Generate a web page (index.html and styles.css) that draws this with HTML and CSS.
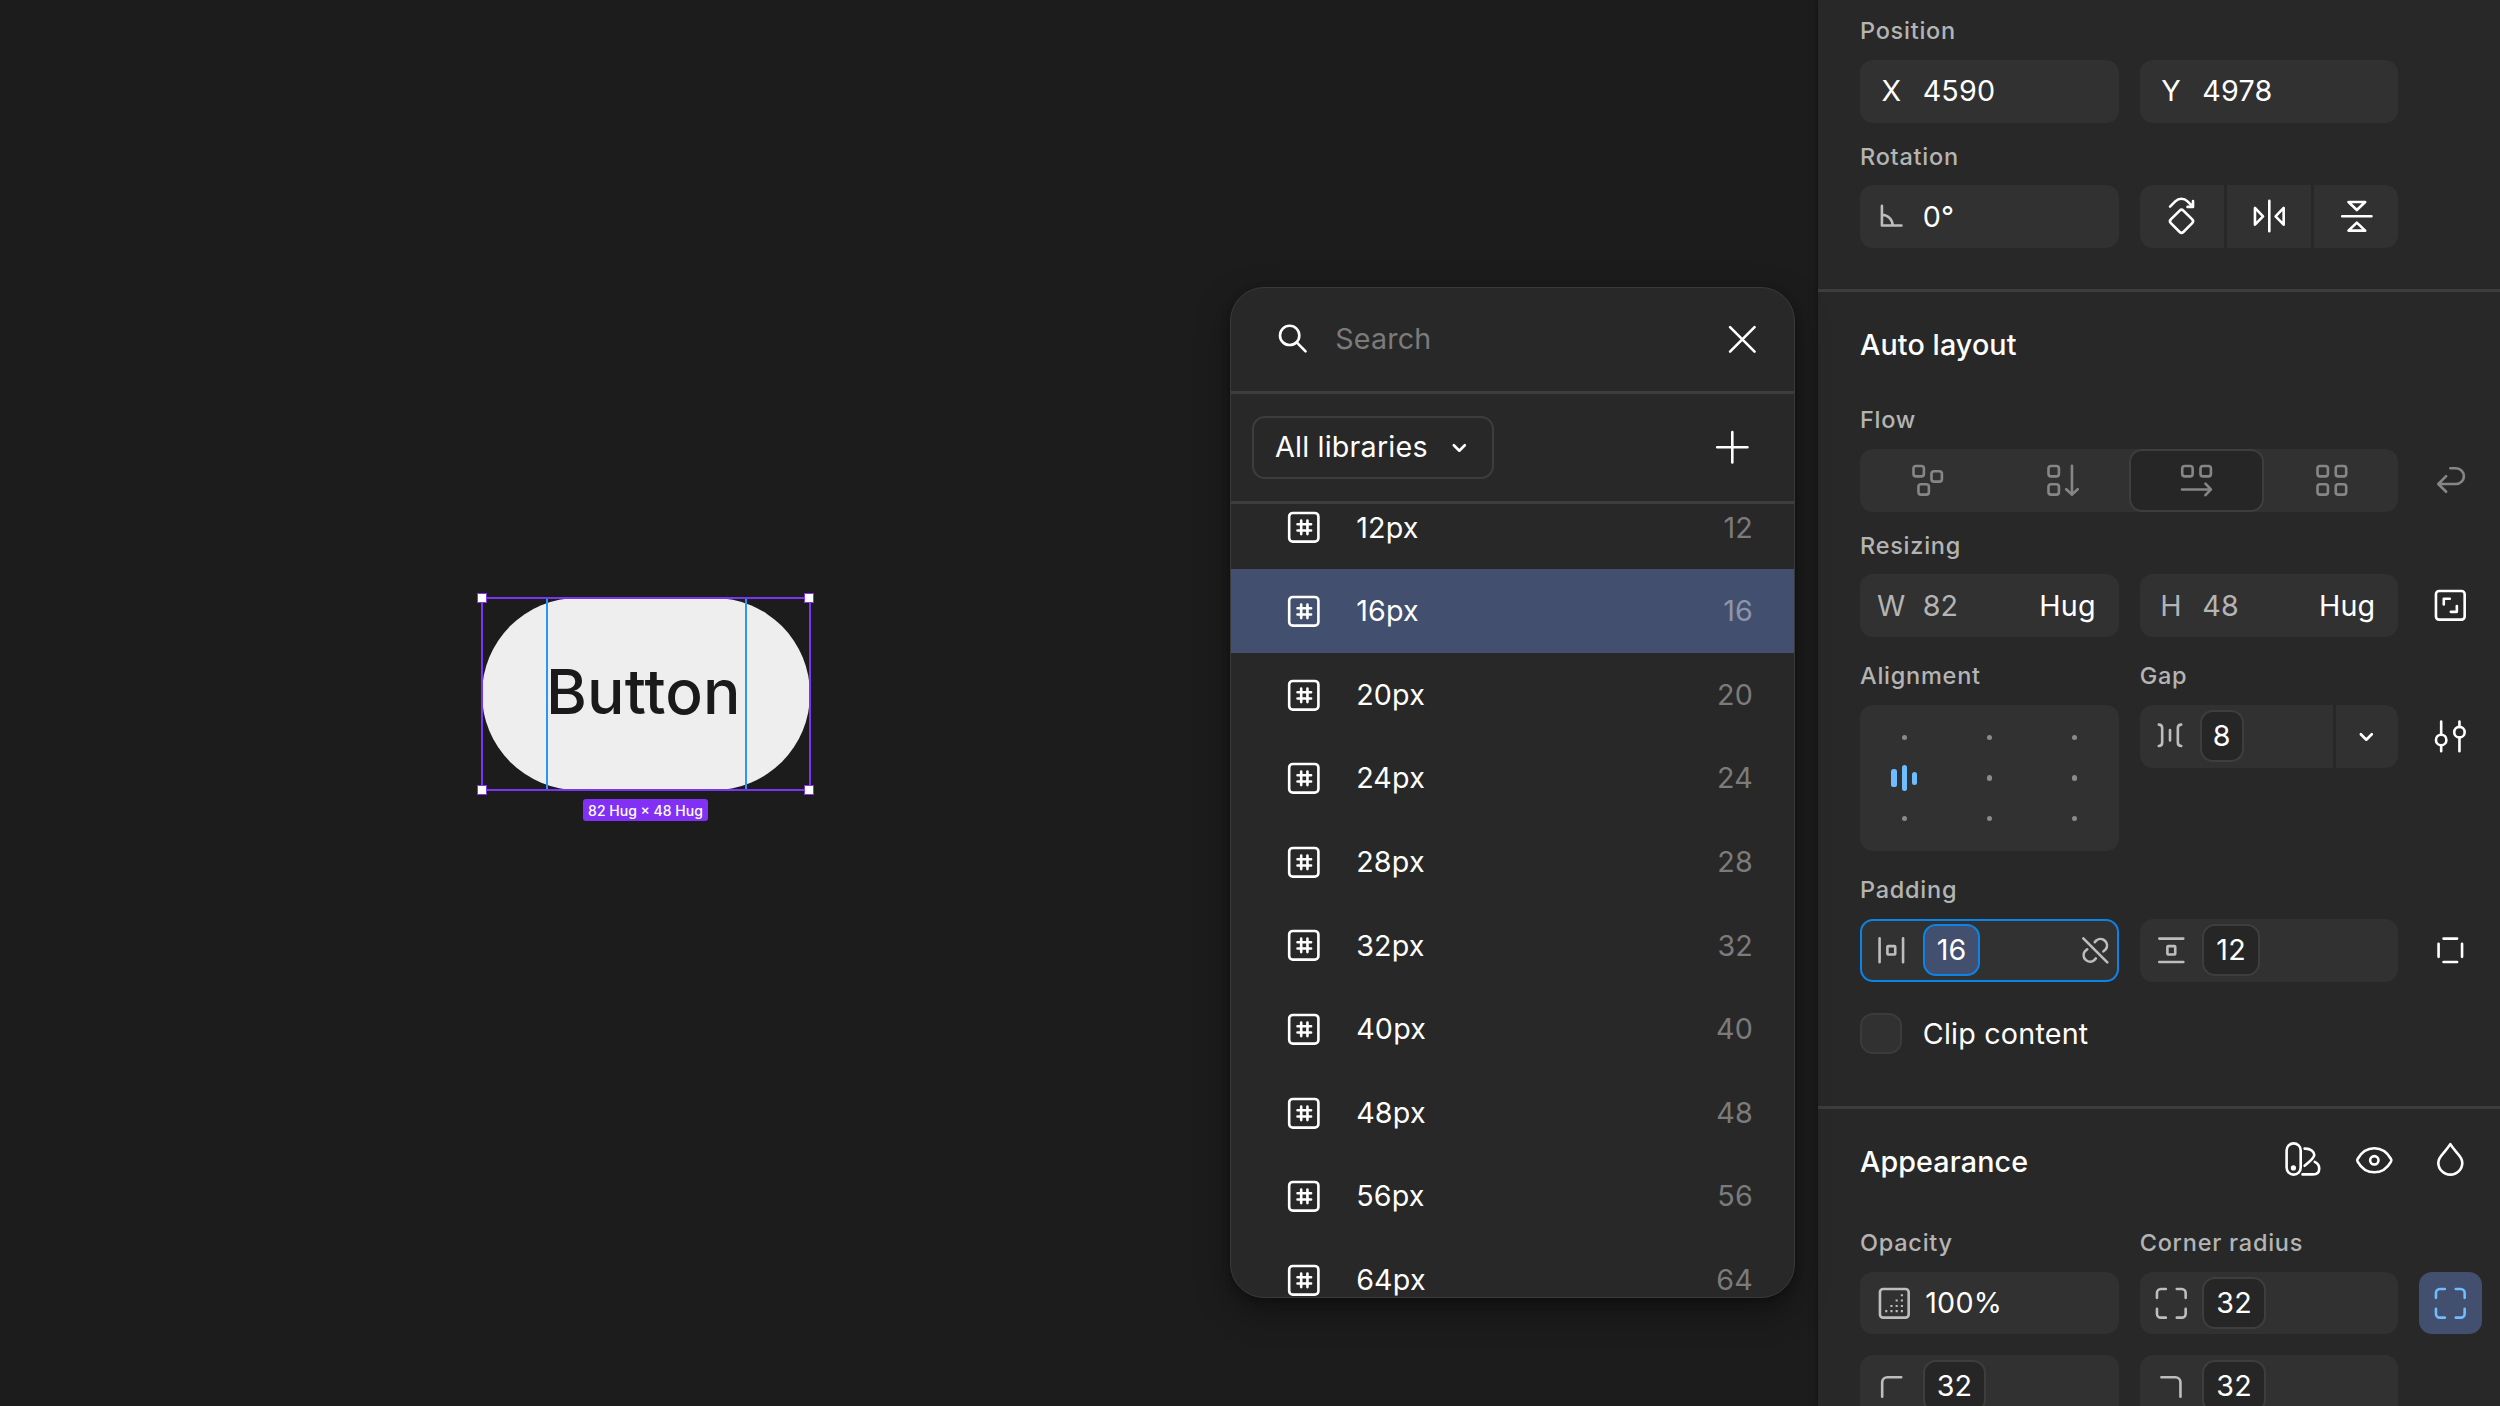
FILE: index.html
```
<!DOCTYPE html>
<html lang="en">
<head>
<meta charset="utf-8">
<title>Design editor</title>
<link rel="stylesheet" href="styles.css">
</head>
<body>
<svg class="defs" aria-hidden="true">
  <symbol id="i-number" viewBox="0 0 24 24"><rect x="6.2" y="6.5" width="11.2" height="11" rx="1.4"/><path d="M10.8 9.4v5.2M13.2 9.4v5.2M9.4 10.8h5.2M9.4 13.2h5.2"/></symbol>
  <symbol id="i-chevron" viewBox="0 0 24 24"><path d="M9.9 11.2L12 13.3l2.1-2.1"/></symbol>
  <symbol id="i-corners" viewBox="0 0 24 24"><path d="M6.5 9.9V8A1.5 1.5 0 0 1 8 6.5h1.9M14.1 6.5H16A1.5 1.5 0 0 1 17.5 8v1.9M17.5 14.1V16a1.5 1.5 0 0 1-1.5 1.5h-1.9M9.9 17.5H8A1.5 1.5 0 0 1 6.5 16v-1.9"/></symbol>
</svg>

<main class="canvas">
  <div class="node">
    <span class="node-text">Button</span>
    <div class="pad-guides"></div>
    <div class="selection"><i></i><i></i><i></i><i></i></div>
    <span class="size-tag">82 Hug × 48 Hug</span>
  </div>

  <section class="picker">
    <header class="picker-search">
      <svg class="icon" viewBox="0 0 24 24"><circle cx="10.6" cy="10.5" r="3.7"/><path d="M13.3 13.2l3.4 3.4"/></svg>
      <span class="placeholder">Search</span>
      <svg class="icon" viewBox="0 0 24 24"><path d="M7.3 7.3l9.4 9.4M16.7 7.3l-9.4 9.4"/></svg>
    </header>
    <div class="picker-filter">
      <button class="select">All libraries<svg class="icon" viewBox="0 0 24 24"><use href="#i-chevron"/></svg></button>
      <svg class="icon" viewBox="0 0 24 24"><path d="M12 6.2v11.6M6.2 12h11.6"/></svg>
    </div>
    <ul class="options">
      <li><svg class="icon"><use href="#i-number"/></svg><span>12px</span><em>12</em></li>
      <li class="active"><svg class="icon"><use href="#i-number"/></svg><span>16px</span><em>16</em></li>
      <li><svg class="icon"><use href="#i-number"/></svg><span>20px</span><em>20</em></li>
      <li><svg class="icon"><use href="#i-number"/></svg><span>24px</span><em>24</em></li>
      <li><svg class="icon"><use href="#i-number"/></svg><span>28px</span><em>28</em></li>
      <li><svg class="icon"><use href="#i-number"/></svg><span>32px</span><em>32</em></li>
      <li><svg class="icon"><use href="#i-number"/></svg><span>40px</span><em>40</em></li>
      <li><svg class="icon"><use href="#i-number"/></svg><span>48px</span><em>48</em></li>
      <li><svg class="icon"><use href="#i-number"/></svg><span>56px</span><em>56</em></li>
      <li><svg class="icon"><use href="#i-number"/></svg><span>64px</span><em>64</em></li>
    </ul>
  </section>
</main>

<aside class="sidebar">
  <section class="section section--position">
    <div class="row">
      <div class="group">
        <label>Position</label>
        <div class="field"><span class="prefix">X</span><span>4590</span></div>
      </div>
      <div class="group">
        <label></label>
        <div class="field"><span class="prefix">Y</span><span>4978</span></div>
      </div>
    </div>
    <div class="row">
      <div class="group">
        <label>Rotation</label>
        <div class="field"><svg class="icon dim" viewBox="0 0 24 24"><path d="M8.4 8v7.5h7.5M8.4 11.4a4.1 4.1 0 0 1 4.1 4.1"/></svg><span>0°</span></div>
      </div>
      <div class="group">
        <label></label>
        <div class="buttons">
          <span><svg class="icon" viewBox="0 0 24 24"><path d="M11 9.8a1 1 0 0 1 1.4 0l3.4 3.4a1 1 0 0 1 0 1.4L12.4 18a1 1 0 0 1-1.4 0l-3.4-3.4a1 1 0 0 1 0-1.4zM7.3 8.3l2-2c1.4-1.4 3.3-1.4 4.7 0l2 2M16.1 6.2v2.2H14"/></svg></span>
          <span><svg class="icon" viewBox="0 0 24 24"><path d="M12 6.1v11.6M6.5 8.8v6.4L9.6 12zM17.5 8.8v6.4L14.4 12z"/></svg></span>
          <span><svg class="icon" viewBox="0 0 24 24"><path d="M6.6 12h11.2M9 6.5h6.4l-3.2 3.1zM9 17.5h6.4l-3.2-3.1z"/></svg></span>
        </div>
      </div>
    </div>
  </section>

  <section class="section section--layout">
    <header><h2>Auto layout</h2></header>
    <div class="row">
      <div class="group group--wide">
        <label>Flow</label>
        <div class="segments">
          <span><svg class="icon" viewBox="0 0 24 24"><rect x="6.7" y="6.5" width="4" height="4" rx="1"/><rect x="13.6" y="8.5" width="4" height="4" rx="1"/><rect x="8.6" y="13.5" width="4" height="4" rx="1"/></svg></span>
          <span><svg class="icon" viewBox="0 0 24 24"><rect x="6.7" y="6.5" width="4" height="4" rx="1"/><rect x="6.7" y="13.5" width="4" height="4" rx="1"/><path d="M15.7 6.4v11.1M13.5 15.4l2.2 2.1 2.2-2.1"/></svg></span>
          <span class="on"><svg class="icon" viewBox="0 0 24 24"><rect x="6.6" y="6.5" width="4" height="4" rx="1"/><rect x="13.6" y="6.5" width="4" height="4" rx="1"/><path d="M6.5 15.5h11.1M15.5 13.3l2.1 2.2-2.1 2.2"/></svg></span>
          <span><svg class="icon" viewBox="0 0 24 24"><rect x="6.7" y="6.5" width="4" height="4" rx="1"/><rect x="13.7" y="6.5" width="4" height="4" rx="1"/><rect x="6.7" y="13.5" width="4" height="4" rx="1"/><rect x="13.7" y="13.5" width="4" height="4" rx="1"/></svg></span>
        </div>
      </div>
      <div class="action muted"><svg class="icon" viewBox="0 0 24 24"><path d="M12 7.4h2.2a3 3 0 0 1 0 6H7.5M10.4 10.4l-3 3 3 3"/></svg></div>
    </div>
    <div class="row">
      <div class="group">
        <label>Resizing</label>
        <div class="field"><span class="prefix soft">W</span><span class="soft">82</span><span class="mode">Hug</span></div>
      </div>
      <div class="group">
        <label></label>
        <div class="field"><span class="prefix soft">H</span><span class="soft">48</span><span class="mode">Hug</span></div>
      </div>
      <div class="action"><svg class="icon" viewBox="0 0 24 24"><rect x="6.5" y="6.5" width="11" height="11" rx="1.2"/><path d="M9.5 11.7V9.5h2.3M14.5 12.3v2.2h-2.3"/></svg></div>
    </div>
    <div class="row row--paired">
      <div class="group">
        <label>Alignment</label>
        <div class="align">
          <i></i><i></i><i></i>
          <b><u></u><u></u><u></u></b><i></i><i></i>
          <i></i><i></i><i></i>
        </div>
      </div>
      <div class="group">
        <label>Gap</label>
        <div class="combo">
          <div class="field field--gap"><svg class="icon dim" viewBox="0 0 24 24"><path d="M7.2 7.5q1.3 0 1.3 1.3v5.6q0 1.3-1.3 1.3M15.8 7.5q-1.3 0-1.3 1.3v5.6q0 1.3 1.3 1.3M11.5 9.6v4"/></svg><span class="chip">8</span></div>
          <div class="drop"><svg class="icon" viewBox="0 0 24 24"><use href="#i-chevron"/></svg></div>
        </div>
      </div>
      <div class="action"><svg class="icon" viewBox="0 0 24 24"><circle cx="8.5" cy="13.4" r="2"/><circle cx="15.5" cy="10.4" r="2"/><path d="M8.5 6.3v5.1M8.5 15.4v2.3M15.5 6.3v2.1M15.5 12.4v5.3"/></svg></div>
    </div>
    <div class="row row--paired">
      <div class="group">
        <label>Padding</label>
        <div class="field focus"><svg class="icon dim" viewBox="0 0 24 24"><path d="M7.5 7.4v9.2M16.5 7.4v9.2"/><rect x="10.5" y="10.4" width="3" height="3.2" rx=".3"/></svg><span class="chip chip--on">16</span><svg class="icon dim unlink" viewBox="0 0 24 24"><path d="M7.4 7.4l9.2 9.2M11.8 8.9l.6-.7a2.5 2.5 0 0 1 3.6 3.4l-.9.8M12.2 15.1l-.6.7A2.5 2.5 0 0 1 8 12.4l.9-.8"/></svg></div>
      </div>
      <div class="group">
        <label></label>
        <div class="field"><svg class="icon dim" viewBox="0 0 24 24"><path d="M7.4 7.5h9.2M7.4 16.5h9.2"/><rect x="10.5" y="10.4" width="3" height="3.2" rx=".3"/></svg><span class="chip">12</span></div>
      </div>
      <div class="action"><svg class="icon" viewBox="0 0 24 24"><path d="M9.4 7.5h5.2M9.4 16.5h5.2M7.5 9.5v5M16.5 9.5v5"/></svg></div>
    </div>
    <div class="check"><i></i><span>Clip content</span></div>
  </section>

  <section class="section section--appearance">
    <header>
      <h2>Appearance</h2>
      <div class="tools">
        <svg class="icon" viewBox="0 0 24 24"><rect x="5.6" y="5.5" width="5.4" height="12" rx="2.7"/><circle class="solid" cx="8.2" cy="14.9" r="1"/><path d="M12.5 7.5h.4c1.8 0 3.3 1.1 3.3 2.5 0 1-1.3 2.2-3.7 4.1M16.4 12.6c1.2.6 1.7 1.5 1.7 2.5 0 1.4-.9 2.3-2.4 2.3h-4"/></svg>
        <svg class="icon" viewBox="0 0 24 24"><path d="M5.600 12.500c-.2-.3-.2-.7 0-1C7 9 9.200 7.400 12 7.400s5 1.600 6.400 4.100c.2.3.2.7 0 1C17 15 14.800 16.600 12 16.600S7 15 5.600 12.500z"/><circle cx="12" cy="12" r="1.6"/></svg>
        <svg class="icon" viewBox="0 0 24 24"><path d="M12 5.8c.8 1.3 1.8 2.4 2.8 3.6 1.1 1.2 1.8 2.2 1.8 3.5a4.6 4.6 0 0 1-9.2 0c0-1.3.7-2.3 1.8-3.5 1-1.2 2-2.3 2.8-3.6z"/></svg>
      </div>
    </header>
    <div class="row row--paired">
      <div class="group">
        <label>Opacity</label>
        <div class="field field--opacity"><svg class="icon dim" viewBox="0 0 24 24"><rect x="6.5" y="6.5" width="11" height="11" rx="1.2"/><path class="dots" d="M8.9 15h.01M10.9 15h.01M12.9 15h.01M14.9 15h.01M10.9 13h.01M12.9 13h.01M14.9 13h.01M12.9 10.9h.01M14.9 10.9h.01M14.9 8.9h.01"/></svg><span>100%</span></div>
      </div>
      <div class="group">
        <label>Corner radius</label>
        <div class="field"><svg class="icon dim"><use href="#i-corners"/></svg><span class="chip">32</span></div>
      </div>
      <div class="action action--on"><svg class="icon"><use href="#i-corners"/></svg></div>
    </div>
    <div class="row row--next">
      <div class="group">
        <div class="field"><svg class="icon dim" viewBox="0 0 24 24"><path d="M8.5 16v-5.5a2 2 0 0 1 2-2h5.3"/></svg><span class="chip">32</span></div>
      </div>
      <div class="group">
        <div class="field"><svg class="icon dim" viewBox="0 0 24 24"><path d="M8.2 8.5h5.3a2 2 0 0 1 2 2V16"/></svg><span class="chip">32</span></div>
      </div>
    </div>
  </section>
</aside>
</body>
</html>
```
FILE: styles.css
```
:root {
  --u: 2.61px;
  --bg: #1c1c1c;
  --panel: #282828;
  --field: #313131;
  --line: #3d3d3d;
  --blue: #0c83e8;
  --blue-soft: #434f6e;
}

* { box-sizing: border-box; }

body {
  margin: 0;
  display: flex;
  width: 2500px;
  height: 1406px;
  overflow: hidden;
  background: var(--bg);
  color: #fff;
  font: 420 28.7px/42px Inter, "Liberation Sans", sans-serif;
  letter-spacing: 0.2px;
}

.defs { display: none; }

.icon {
  flex: none;
  width: calc(24 * var(--u));
  height: calc(24 * var(--u));
  fill: none;
  stroke: currentColor;
  stroke-width: 1;
  stroke-linecap: round;
  stroke-linejoin: round;
}
.dim { color: #bdbdbd; }
.solid { fill: currentColor; stroke: none; }
.dots { stroke-linecap: square; stroke-width: .8; }

/* Canvas */
.canvas { position: relative; flex: 1; }

.node {
  position: absolute;
  left: 482px;
  top: 598px;
  width: 328px;
  height: 192px;
  display: flex;
  align-items: center;
  padding: 0 64px 5px;
  border-radius: 96px;
  background: #eee;
}
.node-text {
  color: #1a1a1a;
  font-size: 62.3px;
  font-weight: 500;
  line-height: 96px;
  letter-spacing: 0.2px;
}
.pad-guides {
  position: absolute;
  inset: 0 63.5px;
  border: solid #2a95f5;
  border-width: 0 2px;
}
.selection {
  position: absolute;
  inset: -1px;
  border: 2px solid #7a35f0;
}
.selection i {
  position: absolute;
  width: 10px;
  height: 10px;
  background: #fff;
  border: 1px solid #8638e5;
}
.selection i:nth-child(1) { left: -6px; top: -6px; }
.selection i:nth-child(2) { right: -5px; top: -6px; }
.selection i:nth-child(3) { left: -6px; bottom: -6px; }
.selection i:nth-child(4) { right: -5px; bottom: -6px; }
.size-tag {
  position: absolute;
  left: 101px;
  top: 201px;
  width: 125px;
  height: 22px;
  border-radius: 3px;
  background: #8230f5;
  font-size: 14px;
  font-weight: 500;
  line-height: 23px;
  letter-spacing: 0;
  text-align: center;
  white-space: nowrap;
}

/* Variable picker */
.picker {
  position: absolute;
  left: 1230px;
  top: 287px;
  width: 565px;
  height: 1011px;
  display: flex;
  flex-direction: column;
  overflow: hidden;
  border: 1px solid #3a3a3a;
  border-radius: 34px;
  background: var(--panel);
  box-shadow: 0 13px 34px rgba(0, 0, 0, .36), 0 3px 8px rgba(0, 0, 0, .25);
}
.picker-search {
  flex: none;
  display: flex;
  align-items: center;
  height: 106px;
  padding: 0 20px 1px 30.5px;
  border-bottom: 3px solid var(--line);
}
.placeholder { flex: 1; padding-left: 11px; color: #7b7b7b; }
.picker-filter {
  flex: none;
  display: flex;
  align-items: center;
  justify-content: space-between;
  height: 110px;
  padding: 0 30px 0 20.5px;
  border-bottom: 3px solid var(--line);
}
.select {
  display: flex;
  align-items: center;
  justify-content: space-between;
  width: 242px;
  height: 63px;
  padding: 0 1px 1px 21.5px;
  border: 2px solid var(--line);
  border-radius: 13px;
  background: none;
  color: inherit;
  font: inherit;
  letter-spacing: inherit;
  white-space: nowrap;
}
.options {
  flex: 1;
  display: flex;
  flex-direction: column;
  overflow: hidden;
  margin: 0;
  padding: 0;
  list-style: none;
}
.options li {
  flex: none;
  display: flex;
  align-items: center;
  height: 83.6px;
  padding: 1px 41px 0 42px;
}
.options li:first-child { margin-top: -18.6px; }
.options .active { background: var(--blue-soft); }
.options span { flex: 1; padding-left: 20.5px; }
.options em { color: #7b7b7b; font-style: normal; }
.options .active em { color: #8e95a8; }

/* Sidebar */
.sidebar {
  flex: none;
  width: 682px;
  background: var(--panel);
  box-shadow: 0 0 8px rgba(0, 0, 0, .35);
}
.section {
  padding: 0 18.5px 0 42px;
  border-bottom: 3px solid var(--line);
}
.section--position { height: 294.7px; margin-top: -2.6px; }
.section--layout { height: 817.4px; }
.section--appearance { border: 0; }

.section header {
  display: flex;
  align-items: center;
  justify-content: space-between;
  height: 94.4px;
  padding-top: 10.6px;
}
h2 {
  margin: 0;
  font-size: 28.7px;
  font-weight: 550;
  line-height: 42px;
  letter-spacing: 0.1px;
}
.tools { display: flex; align-items: center; gap: 10px; padding-bottom: 2.5px; }
.tools .icon:first-child { margin-right: -1px; }
.tools .icon:last-child { margin-left: 3px; }

.row { display: flex; align-items: flex-end; gap: 21px; }
.row--paired { margin-top: 5.3px; align-items: flex-start; }
.row--next { margin-top: 20.8px; }

.group { flex: none; width: 258.7px; }
.group--wide { width: 538.4px; }
label {
  display: block;
  height: 62.64px;
  padding-top: 5px;
  color: #b4b4b4;
  font-size: 23.5px;
  font-weight: 450;
  line-height: 58.6px;
  letter-spacing: .75px;
}

.field {
  display: flex;
  align-items: center;
  height: 62.64px;
  border-radius: 13px;
  background: var(--field);
}
.prefix { width: 62.64px; text-align: center; }
.prefix + span { flex: 1; }
.soft { color: #b4b4b4; }
.mode { padding-right: 23px; }

.chip {
  height: 52.2px;
  padding: 0 12px;
  border: 2px solid #3e3e3e;
  border-radius: 13px;
  background: #262626;
  line-height: 48.2px;
}
.chip--on { border-color: var(--blue); background: var(--blue-soft); }
.focus { border: 2.6px solid var(--blue); }
.focus .icon:first-child { margin-left: -2px; }
.focus .unlink { margin: 0 -10px 0 auto; }

.buttons { display: grid; grid-template-columns: repeat(3, 1fr); gap: 2.6px; overflow: hidden; border-radius: 13px; }
.buttons span { display: flex; justify-content: center; background: var(--field); }

.segments { display: grid; grid-template-columns: repeat(4, 1fr); border-radius: 13px; background: var(--field); color: #868686; }
.segments span { display: flex; align-items: center; justify-content: center; height: 62.64px; border: 2px solid transparent; border-radius: 13px; }
.segments .on { border-color: #3e3e3e; background: #262626; }

.action { display: flex; align-items: center; justify-content: center; width: 62.64px; height: 62.64px; border-radius: 13px; }
.row--paired .action { margin-top: 62.64px; }
.muted { color: #868686; }
.action--on { background: var(--blue-soft); color: #6fbdff; }

.align {
  display: grid;
  grid-template-columns: repeat(3, 84.9px);
  grid-template-rows: repeat(3, 40.5px);
  place-items: center;
  height: 146.2px;
  padding: 12.4px 2px;
  border-radius: 13px;
  background: var(--field);
}
.align i { width: 5.2px; height: 5.2px; border-radius: 50%; background: #8a8a8a; }
.align b { display: flex; align-items: center; gap: 5.2px; }
.align u { width: 5.2px; height: 18px; border-radius: 2.6px; background: #6fbdff; }
.align u:nth-child(2) { height: 26px; }
.align u:nth-child(3) { height: 13px; }

.combo { display: flex; gap: 2.6px; }
.combo .field { flex: 1; border-radius: 13px 0 0 13px; }
.field--gap .chip { margin-left: -2.6px; padding: 0 11px; }
.drop { display: flex; width: 62.64px; height: 62.64px; border-radius: 0 13px 13px 0; background: var(--field); }
.drop .icon { margin-left: -0.8px; }
.field--opacity .icon { margin: 0 0 0 2.6px; }

.check { display: flex; align-items: center; gap: 21px; margin-top: 31px; height: 41.8px; }
.check i { width: 41.8px; height: 41.8px; border: 2.6px solid #3b3b3b; border-radius: 13px; background: #313131; }
```
